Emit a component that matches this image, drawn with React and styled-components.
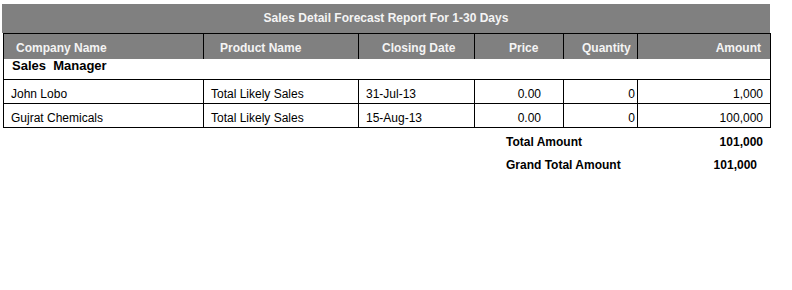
import styled, { createGlobalStyle } from "styled-components";

const GlobalStyle = createGlobalStyle`
  body {
    margin: 0;
    background: #fff;
    font-family: "Liberation Sans", Arial, sans-serif;
    font-size: 12px;
    color: #000;
  }
`;

const Report = styled.div`
  width: 768px;
  margin: 4px 0 0 2px;
`;

const Title = styled.div`
  height: 29px;
  line-height: 29px;
  background: #808080;
  color: #f4f4f4;
  font-weight: bold;
  font-size: 12px;
  text-align: center;
`;

const Table = styled.table`
  width: 767px;
  margin-left: 1px;
  border-collapse: collapse;
  table-layout: fixed;
  border-left: 1px solid #000;
  border-right: 1px solid #000;
`;

const HeadRow = styled.tr`
  background: #808080;
  border-top: 1px solid #000;
  height: 25px;
`;

const HeadCell = styled.th`
  color: #f4f4f4;
  font-weight: bold;
  font-size: 12px;
  padding: 3px ${(p) => p.$right || 0}px 0 ${(p) => p.$indent || 0}px;
  text-align: ${(p) => p.$align || "left"};
  border-left: 1px solid #000;
  white-space: nowrap;
`;

const GroupRow = styled.tr`
  height: 21px;
  border-bottom: 1px solid #000;
`;

const GroupCell = styled.td`
  font-weight: bold;
  font-size: 13px;
  line-height: 14px;
  vertical-align: top;
  padding: 0 0 0 8px;
  white-space: pre;
`;

const DataRow = styled.tr`
  height: 24px;
  border-bottom: 1px solid #000;
`;

const DataCell = styled.td`
  border-left: 1px solid #000;
  padding: 4px ${(p) => p.$pad ?? 7}px 0 7px;
  text-align: ${(p) => p.$align || "left"};
  white-space: nowrap;
`;

const Totals = styled.div`
  display: flex;
  flex-direction: column;
  margin: 2px 0 0 504px;
  width: 266px;
  font-weight: bold;
  font-size: 12px;
`;

const TotalRow = styled.div`
  display: flex;
  justify-content: space-between;
  height: 23px;
  align-items: center;
  padding-right: ${(p) => p.$pad}px;
`;

const rows = [
  { company: "John Lobo", product: "Total Likely Sales", date: "31-Jul-13", price: "0.00", qty: "0", amount: "1,000" },
  { company: "Gujrat Chemicals", product: "Total Likely Sales", date: "15-Aug-13", price: "0.00", qty: "0", amount: "100,000" },
];

export default function App() {
  return (
    <>
      <GlobalStyle />
      <Report>
        <Title>Sales Detail Forecast Report For 1-30 Days</Title>
        <Table>
          <colgroup>
            <col style={{ width: 200 }} />
            <col style={{ width: 155 }} />
            <col style={{ width: 116 }} />
            <col style={{ width: 89 }} />
            <col style={{ width: 74 }} />
            <col style={{ width: 133 }} />
          </colgroup>
          <thead>
            <HeadRow>
              <HeadCell $indent={12}>Company Name</HeadCell>
              <HeadCell $indent={16}>Product Name</HeadCell>
              <HeadCell $indent={23}>Closing Date</HeadCell>
              <HeadCell $indent={34}>Price</HeadCell>
              <HeadCell $indent={18}>Quantity</HeadCell>
              <HeadCell $align="right" $right={9}>Amount</HeadCell>
            </HeadRow>
          </thead>
          <tbody>
            <GroupRow>
              <GroupCell colSpan={6}>{"Sales  Manager"}</GroupCell>
            </GroupRow>
            {rows.map((r) => (
              <DataRow key={r.company}>
                <DataCell>{r.company}</DataCell>
                <DataCell>{r.product}</DataCell>
                <DataCell $pad={4}>{r.date}</DataCell>
                <DataCell $align="right" $pad={22}>{r.price}</DataCell>
                <DataCell $align="right" $pad={2}>{r.qty}</DataCell>
                <DataCell $align="right" $pad={7}>{r.amount}</DataCell>
              </DataRow>
            ))}
          </tbody>
        </Table>
        <Totals>
          <TotalRow $pad={9}>
            <span>Total Amount</span>
            <span>101,000</span>
          </TotalRow>
          <TotalRow $pad={15}>
            <span>Grand Total Amount</span>
            <span>101,000</span>
          </TotalRow>
        </Totals>
      </Report>
    </>
  );
}
